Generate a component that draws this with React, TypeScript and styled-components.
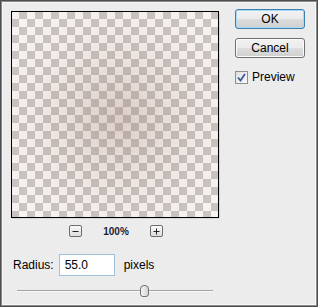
import React from "react";
import styled, { createGlobalStyle } from "styled-components";

const GlobalStyle = createGlobalStyle`
  html, body {
    margin: 0;
    padding: 0;
    background: #ececec;
  }
  * {
    box-sizing: border-box;
  }
`;

const StyledWindow = styled.div`
  width: 318px;
  height: 307px;
  background: #ececec;
  border: 1px solid #4e4e4e;
  box-shadow: inset 0 0 0 1px #8a8a8a, inset 0 0 0 2px #f7f7f7;
  padding: 8px 0 0 10px;
  font-family: "Liberation Sans", Arial, sans-serif;
  font-size: 11px;
  color: #000;
  display: flex;
  flex-direction: column;
`;

const StyledTopRow = styled.div`
  display: flex;
  align-items: flex-start;
  gap: 16px;
`;

const StyledPreviewColumn = styled.div`
  display: flex;
  flex-direction: column;
  padding-top: 2px;
`;

const StyledPreview = styled.div`
  position: relative;
  width: 208px;
  height: 207px;
  border: 1px solid #000;
  background-color: #fbf8f6;
  background-image: linear-gradient(45deg, #ccc8c6 25%, transparent 25%),
    linear-gradient(-45deg, #ccc8c6 25%, transparent 25%),
    linear-gradient(45deg, transparent 75%, #ccc8c6 75%),
    linear-gradient(-45deg, transparent 75%, #ccc8c6 75%);
  background-size: 16px 16px;
  background-position: -1px -1px, -1px 7px, 7px -9px, -9px -1px;
  box-shadow: 1px 1px 0 #d8d8d8;
`;

const StyledBlur = styled.div`
  position: absolute;
  inset: 0;
  background: radial-gradient(
    circle at 52% 52%,
    rgba(130, 85, 65, 0.26) 0%,
    rgba(130, 85, 65, 0.16) 30%,
    rgba(130, 85, 65, 0.07) 60%,
    rgba(130, 85, 65, 0.03) 85%
  );
`;

const StyledZoomRow = styled.div`
  display: flex;
  align-items: center;
  justify-content: center;
  gap: 21px;
  margin-top: 7px;
  height: 12px;
  padding-left: 2px;
`;

const StyledZoomButton = styled.div`
  width: 13px;
  height: 12px;
  border: 1px solid #6d6d6d;
  border-radius: 2px;
  background: linear-gradient(#fbfbfb, #dcdcdc);
  display: flex;
  align-items: center;
  justify-content: center;
`;

const StyledZoomText = styled.span`
  font-size: 10px;
  font-weight: bold;
  color: #1c1c38;
`;

const StyledButtonColumn = styled.div`
  display: flex;
  flex-direction: column;
  width: 70px;
`;

const StyledButton = styled.div<{ $primary?: boolean }>`
  height: 20px;
  border: 1px solid ${(p) => (p.$primary ? "#3c7fb1" : "#707070")};
  border-radius: 3px;
  background: linear-gradient(#f2f2f2 0%, #ebebeb 50%, #dddddd 51%, #cfcfcf 100%);
  box-shadow: inset 0 0 0 1px ${(p) => (p.$primary ? "#a7d8f5" : "#fcfcfc")};
  display: flex;
  align-items: center;
  justify-content: center;
  font-size: 12px;
  margin-bottom: 9px;
`;

const StyledCheckRow = styled.label`
  display: flex;
  align-items: center;
  gap: 4px;
  margin-top: 3px;
  font-size: 12px;
`;

const StyledCheckBox = styled.div`
  width: 13px;
  height: 13px;
  border: 1px solid #8e8f8f;
  background: linear-gradient(135deg, #dedede, #fbfbfb);
  display: flex;
  align-items: center;
  justify-content: center;
`;

const StyledRadiusRow = styled.div`
  display: flex;
  align-items: center;
  margin-top: 17px;
  padding-left: 2px;
  font-size: 12px;
`;

const StyledInput = styled.div`
  width: 56px;
  height: 22px;
  margin-left: 5px;
  margin-right: 9px;
  border: 1px solid #9fc0df;
  background: #fff;
  padding-left: 5px;
  display: flex;
  align-items: center;
  font-size: 12px;
`;

const StyledSlider = styled.div`
  position: relative;
  width: 196px;
  height: 12px;
  margin: 9px 0 0 6px;
`;

const StyledTrack = styled.div`
  position: absolute;
  left: 0;
  right: 0;
  top: 5px;
  height: 2px;
  border-top: 1px solid #a3a3a3;
  border-bottom: 1px solid #f8f8f8;
`;

const StyledThumb = styled.div`
  position: absolute;
  left: 123px;
  top: 0;
  width: 9px;
  height: 12px;
  border: 1px solid #707070;
  border-radius: 4px 4px 3px 3px;
  background: linear-gradient(90deg, #f4f4f4, #d6d6d6);
`;

const MinusIcon = () => (
  <svg width="7" height="7" viewBox="0 0 7 7">
    <rect x="0.5" y="3" width="6" height="1" fill="#222" />
  </svg>
);

const PlusIcon = () => (
  <svg width="7" height="7" viewBox="0 0 7 7">
    <rect x="0.5" y="3" width="6" height="1" fill="#222" />
    <rect x="3" y="0.5" width="1" height="6" fill="#222" />
  </svg>
);

const CheckIcon = () => (
  <svg width="9" height="9" viewBox="0 0 9 9">
    <path d="M1 4.5 L3.5 7.5 L8 1" stroke="#3d56a0" strokeWidth="1.8" fill="none" />
  </svg>
);

const App = () => {
  return (
    <>
      <GlobalStyle />
      <StyledWindow>
        <StyledTopRow>
          <StyledPreviewColumn>
            <StyledPreview>
              <StyledBlur />
            </StyledPreview>
            <StyledZoomRow>
              <StyledZoomButton>
                <MinusIcon />
              </StyledZoomButton>
              <StyledZoomText>100%</StyledZoomText>
              <StyledZoomButton>
                <PlusIcon />
              </StyledZoomButton>
            </StyledZoomRow>
          </StyledPreviewColumn>

          <StyledButtonColumn>
            <StyledButton $primary>OK</StyledButton>
            <StyledButton>Cancel</StyledButton>
            <StyledCheckRow>
              <StyledCheckBox>
                <CheckIcon />
              </StyledCheckBox>
              Preview
            </StyledCheckRow>
          </StyledButtonColumn>
        </StyledTopRow>

        <StyledRadiusRow>
          Radius:
          <StyledInput>55.0</StyledInput>
          pixels
        </StyledRadiusRow>

        <StyledSlider>
          <StyledTrack />
          <StyledThumb />
        </StyledSlider>
      </StyledWindow>
    </>
  );
};

export default App;
